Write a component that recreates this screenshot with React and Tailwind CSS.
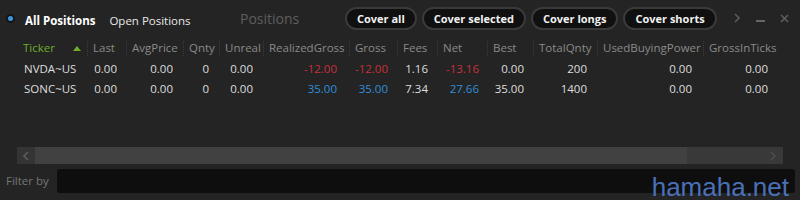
import React from 'react'

const COLS = [
  { key: 'ticker', label: 'Ticker', w: 'w-[69px]', pr: '' },
  { key: 'last', label: 'Last', w: 'w-[39px]', pr: 'pr-[9px]' },
  { key: 'avg', label: 'AvgPrice', w: 'w-[57px]', pr: 'pr-[10px]' },
  { key: 'qnty', label: 'Qnty', w: 'w-[36px]', pr: 'pr-[10px]' },
  { key: 'unreal', label: 'Unreal', w: 'w-[44px]', pr: 'pr-[10px]' },
  { key: 'rg', label: 'RealizedGross', w: 'w-[86px]', pr: 'pr-[12px]' },
  { key: 'gross', label: 'Gross', w: 'w-[48px]', pr: 'pr-[9px]' },
  { key: 'fees', label: 'Fees', w: 'w-[40px]', pr: 'pr-[9px]' },
  { key: 'net', label: 'Net', w: 'w-[50px]', pr: 'pr-[8px]' },
  { key: 'best', label: 'Best', w: 'w-[46px]', pr: 'pr-[9px]' },
  { key: 'tq', label: 'TotalQnty', w: 'w-[64px]', pr: 'pr-[10px]' },
  { key: 'ubp', label: 'UsedBuyingPower', w: 'w-[106px]', pr: 'pr-[11px]' },
  { key: 'git', label: 'GrossInTicks', w: 'w-[74px]', pr: 'pr-[9px]' },
]

const RED = 'text-[#c8303a]'
const BLUE = 'text-[#2f8fd8]'

const ROWS = [
  {
    ticker: 'NVDA~US', last: '0.00', avg: '0.00', qnty: '0', unreal: '0.00',
    rg: '-12.00', gross: '-12.00', fees: '1.16', net: '-13.16', best: '0.00',
    tq: '200', ubp: '0.00', git: '0.00', tone: RED,
  },
  {
    ticker: 'SONC~US', last: '0.00', avg: '0.00', qnty: '0', unreal: '0.00',
    rg: '35.00', gross: '35.00', fees: '7.34', net: '27.66', best: '35.00',
    tq: '1400', ubp: '0.00', git: '0.00', tone: BLUE,
  },
]

const COLORED = ['rg', 'gross', 'net']

const BUTTONS = ['Cover all', 'Cover selected', 'Cover longs', 'Cover shorts']

export default function App() {
  return (
    <div className="relative w-[800px] h-[200px] overflow-hidden bg-[#242424] font-['Open_Sans',sans-serif] text-[11.5px] text-[#dedede]">
      {/* top bar */}
      <div className="flex h-[36px] items-center">
        <div className="flex w-[240px] shrink-0 items-center">
          <span className="ml-[6px] w-[9px] h-[9px] rounded-full bg-[#3c98de] border-2 border-[#141414]" />
          <span className="ml-[10px] pt-[6px] font-bold text-white">All Positions</span>
          <span className="ml-[14px] pt-[6px] text-[#e8e8e8]">Open Positions</span>
        </div>
        <span className="w-[105px] shrink-0 text-[14px] text-[#5e5e5e]">Positions</span>
        <div className="flex shrink-0 gap-[5px]">
          {BUTTONS.map((b) => (
            <button
              key={b}
              className="h-[23px] shrink-0 whitespace-nowrap rounded-full border-2 border-[#3a3a3a] bg-[#101010] px-[10px] text-[11px] font-bold text-[#f2f2f2] leading-none"
            >
              {b}
            </button>
          ))}
        </div>
        <svg className="ml-[17px] shrink-0" width="6" height="10" viewBox="0 0 6 10">
          <path d="M1 1 L5 5 L1 9" stroke="#5a5a5a" strokeWidth="1.6" fill="none" />
        </svg>
        <span className="ml-[16px] mt-[5px] w-[9px] h-[2px] shrink-0 bg-[#666]" />
        <svg className="ml-[15px] shrink-0" width="9" height="9" viewBox="0 0 9 9">
          <path d="M1 1 L8 8 M8 1 L1 8" stroke="#5e5e5e" strokeWidth="1.6" />
        </svg>
      </div>

      {/* table */}
      <div className="ml-[18px] mt-[1px]">
        <div className="flex h-[22px] items-center">
          {COLS.map((c, i) => (
            <div
              key={c.key}
              className={`${c.w} shrink-0 flex h-[15px] items-center ${i === 0 ? 'justify-between pl-[5px] pr-[6px] text-[#6fae2c]' : 'pl-[5px] border-l border-dotted border-[#3c3c3c] text-[#8a8a8a]'}`}
            >
              <span>{c.label}</span>
              {i === 0 && (
                <svg width="8" height="5" viewBox="0 0 8 5">
                  <path d="M0 5 L4 0 L8 5 Z" fill="#6fae2c" />
                </svg>
              )}
            </div>
          ))}
        </div>
        {ROWS.map((r) => (
          <div key={r.ticker} className="flex h-[20px] items-center">
            {COLS.map((c, i) => (
              <div
                key={c.key}
                className={`${c.w} shrink-0 ${i === 0 ? 'pl-[6px]' : `text-right ${c.pr}`} ${COLORED.includes(c.key) ? r.tone : ''}`}
              >
                {r[c.key]}
              </div>
            ))}
          </div>
        ))}
      </div>

      {/* horizontal scrollbar */}
      <div className="ml-[17px] mt-[48px] flex h-[17px] w-[766px]">
        <div className="flex w-[18px] items-center justify-center bg-[#343434]">
          <svg width="6" height="10" viewBox="0 0 6 10">
            <path d="M5 1 L1 5 L5 9" stroke="#5c5c5c" strokeWidth="1.6" fill="none" />
          </svg>
        </div>
        <div className="w-[652px] bg-[#414141]" />
        <div className="flex flex-1 items-center justify-end bg-[#393939] pr-[7px]">
          <svg width="6" height="10" viewBox="0 0 6 10">
            <path d="M1 1 L5 5 L1 9" stroke="#4c4c4c" strokeWidth="1.6" fill="none" />
          </svg>
        </div>
      </div>

      {/* filter */}
      <div className="mt-[5px] flex items-center">
        <span className="ml-[6px] text-[#767676]">Filter by</span>
        <div className="ml-[8px] h-[24px] w-[738px] rounded-[3px] bg-[#0e0e0e]" />
      </div>

      <span className="absolute right-[11px] top-[176px] font-['Liberation_Sans',sans-serif] text-[26px] leading-[23px] text-[#4a70b8]">
        hamaha.net
      </span>
    </div>
  )
}
